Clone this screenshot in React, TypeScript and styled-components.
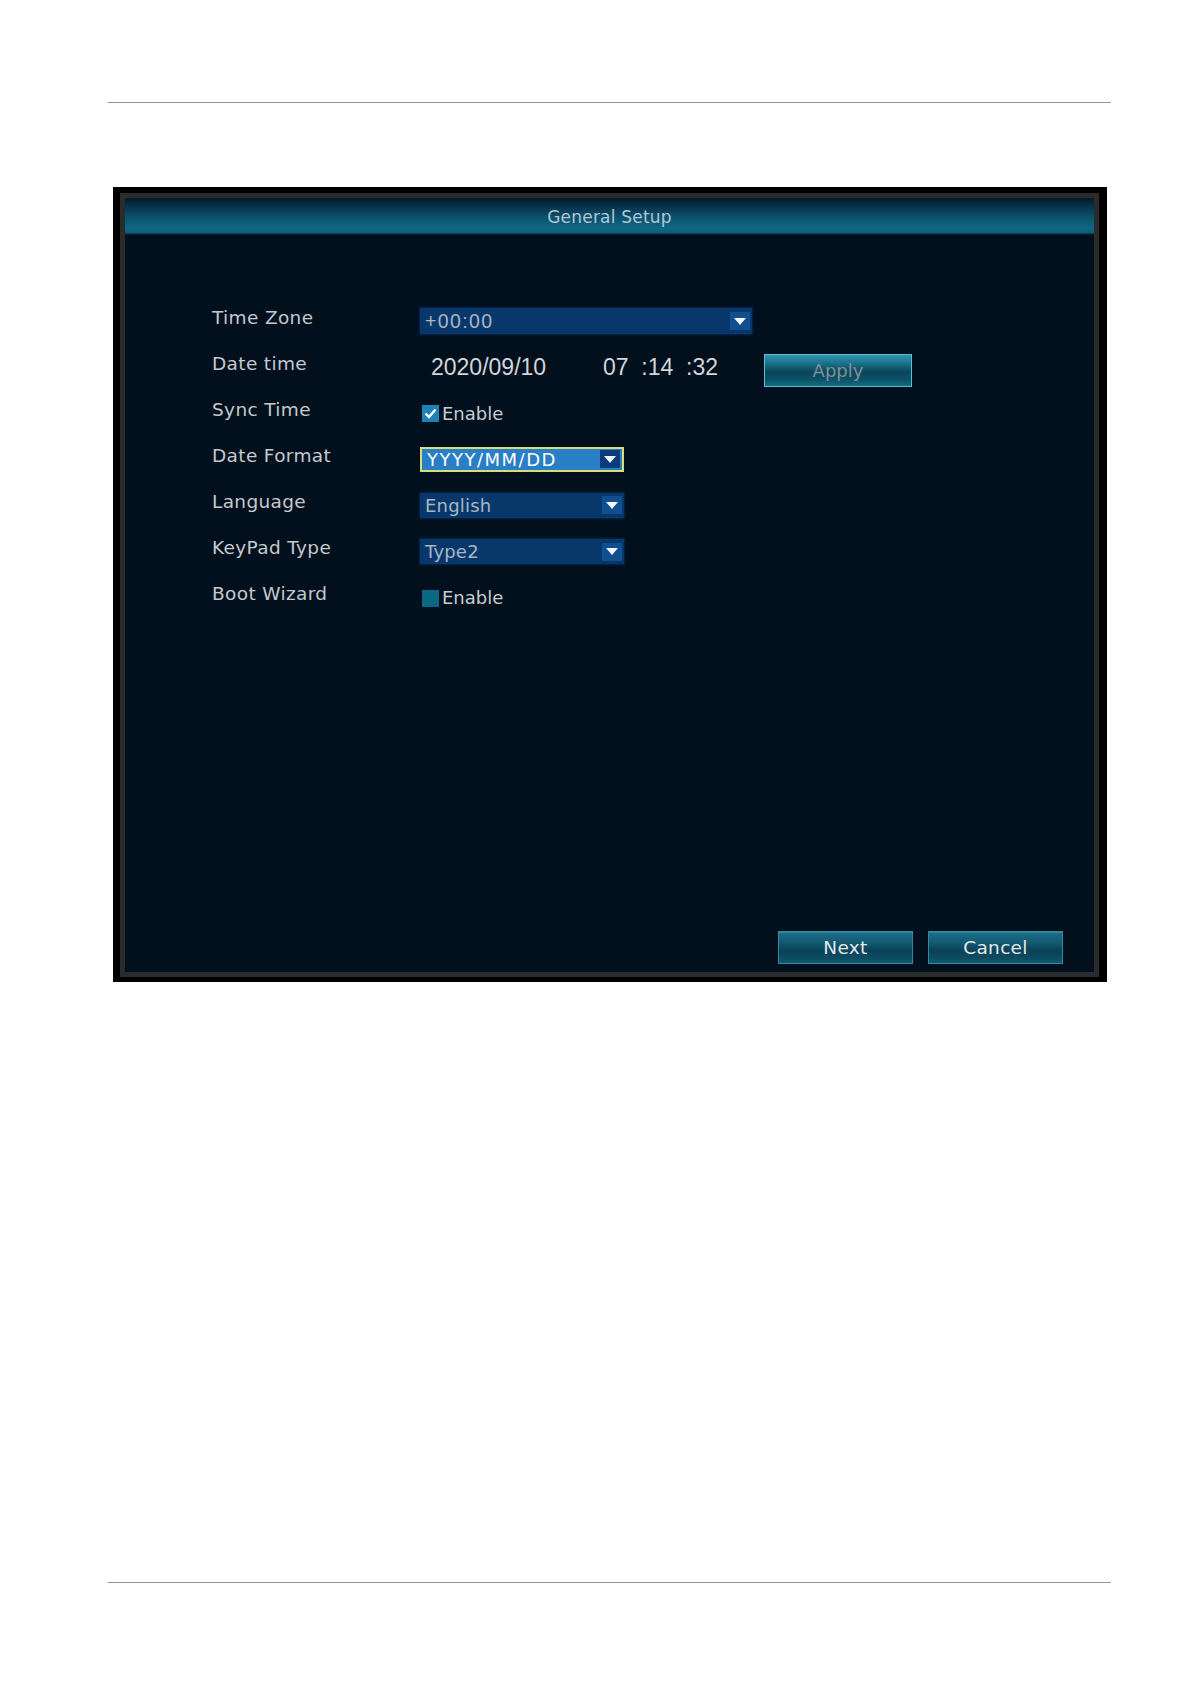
import * as React from 'react';
import styled, { createGlobalStyle } from 'styled-components';

const GlobalStyle = createGlobalStyle`
  html, body {
    margin: 0;
    padding: 0;
    background: #ffffff;
  }
  * { box-sizing: border-box; }
`;

const Page = styled.div`
  width: 1191px;
  min-height: 1684px;
  padding-top: 102px;
  background: #ffffff;
  font-family: "DejaVu Sans", Verdana, sans-serif;
`;

const Rule = styled.div`
  margin: 0 0 0 108px;
  width: 1003px;
  height: 1px;
  background: #929292;
`;

const Frame = styled.section`
  margin: 84px 0 600px 113px;
  width: 994px;
  height: 795px;
  background: #000;
  padding: 6px 8px 5px 7px;
  display: flex;
`;

const Bezel = styled.div`
  flex: 1;
  border: 5px solid #2a2b2d;
  background: #020f1c;
  display: flex;
  flex-direction: column;
`;

const TitleBar = styled.header`
  height: 37px;
  display: flex;
  align-items: center;
  justify-content: center;
  background: linear-gradient(
    to bottom,
    #061826 0%,
    #08314a 22%,
    #0b4f6b 50%,
    #0f6784 82%,
    #0e5e78 93%,
    #04121e 100%
  );
  color: #b2c8d4;
  font-size: 17px;
  letter-spacing: 0.2px;
`;

const Form = styled.div`
  padding: 62px 0 0 87px;
  display: flex;
  flex-direction: column;
`;

const Row = styled.div`
  height: 46.1px;
  display: flex;
  align-items: center;
`;

const Label = styled.div`
  width: 208px;
  padding-bottom: 6px;
  color: #c4c9ce;
  font-size: 18.5px;
  letter-spacing: 0.35px;
`;

const Select = styled.div<{ $width: number; $focus?: boolean; $tall?: boolean }>`
  width: ${(p) => p.$width}px;
  height: ${(p) => (p.$tall ? 26 : 25)}px;
  display: flex;
  align-items: center;
  justify-content: space-between;
  padding: 0 2px 0 5px;
  margin-top: 2px;
  background: ${(p) => (p.$focus ? '#2a7ec6' : '#08386b')};
  border: ${(p) => (p.$focus ? '2px solid #d6de7a' : 'none')};
  box-shadow: ${(p) => (p.$focus ? 'none' : '0 0 2px 1px rgba(8, 56, 107, 0.6)')};
`;

const Value = styled.span<{ $focus?: boolean; $mono?: boolean }>`
  color: ${(p) => (p.$focus ? '#ffffff' : '#a9b6c3')};
  font-family: ${(p) => (p.$mono ? '"Liberation Sans", Arial, sans-serif' : '"DejaVu Sans", Verdana, sans-serif')};
  font-size: ${(p) => (p.$mono ? 19.5 : 18)}px;
  letter-spacing: ${(p) => (p.$mono ? 1.4 : p.$focus ? 1.5 : 0.2)}px;
  line-height: 1;
  padding-top: 1px;
`;

const ArrowBox = styled.span<{ $focus?: boolean }>`
  width: 20px;
  height: 18px;
  display: flex;
  align-items: center;
  justify-content: center;
  background: ${(p) => (p.$focus ? '#0b3b78' : '#0f4f90')};
`;

const DateText = styled.span<{ $width: number }>`
  width: ${(p) => p.$width}px;
  font-family: "Liberation Sans", Arial, sans-serif;
  font-size: 23px;
  color: #d2d6da;
  line-height: 1;
  padding-top: 3px;
`;

const DateGroup = styled.div`
  display: flex;
  align-items: center;
  padding-left: 11px;
`;

const Apply = styled.button`
  width: 148px;
  height: 33px;
  margin-top: 9px;
  border: 1px solid #58bed2;
  background: linear-gradient(
    to bottom,
    #3096ae 0%,
    #1c748c 25%,
    #0a4558 55%,
    #0c5368 80%,
    #136c82 100%
  );
  color: #7f9099;
  font-family: "DejaVu Sans", Verdana, sans-serif;
  font-size: 18px;
  padding: 0;
`;

const CheckGroup = styled.label`
  display: flex;
  align-items: center;
  margin-top: 3px;
  padding-left: 2px;
`;

const Box = styled.span<{ $checked?: boolean }>`
  width: 17px;
  height: 17px;
  display: flex;
  align-items: center;
  justify-content: center;
  background: ${(p) => (p.$checked ? '#1d82b4' : '#0b6882')};
`;

const CheckText = styled.span`
  margin-left: 3px;
  color: #c8cdd2;
  font-size: 18px;
  line-height: 1;
`;

const Footer = styled.div`
  margin-top: auto;
  display: flex;
  justify-content: flex-end;
  gap: 15px;
  padding: 0 31px 8px 0;
`;

const ActionButton = styled.button`
  width: 135px;
  height: 33px;
  border: 1px solid #2f8ba2;
  background: linear-gradient(
    to bottom,
    #1c6f88 0%,
    #145d75 30%,
    #0a4257 60%,
    #0d4c62 85%,
    #125a70 100%
  );
  box-shadow: inset 0 1px 0 rgba(120, 200, 220, 0.25);
  color: #e2e8ec;
  font-family: "DejaVu Sans", Verdana, sans-serif;
  font-size: 18.5px;
  letter-spacing: 0.3px;
  padding: 0;
`;

function Arrow({ focus }: { focus?: boolean }) {
  return (
    <ArrowBox $focus={focus}>
      <svg width="12" height="7" viewBox="0 0 12 7">
        <path d="M0 0 H12 L6 7 Z" fill="#f2f6fa" />
      </svg>
    </ArrowBox>
  );
}

function Dropdown({ value, width, focus, mono, tall }: { value: string; width: number; focus?: boolean; mono?: boolean; tall?: boolean }) {
  return (
    <Select $width={width} $focus={focus} $tall={tall}>
      <Value $focus={focus} $mono={mono}>{value}</Value>
      <Arrow focus={focus} />
    </Select>
  );
}

function Check({ checked }: { checked?: boolean }) {
  return (
    <CheckGroup>
      <Box $checked={checked}>
        {checked && (
          <svg width="13" height="11" viewBox="0 0 13 11">
            <path d="M1.5 5.5 L5 9 L11.5 1.5" fill="none" stroke="#ffffff" strokeWidth="2.4" />
          </svg>
        )}
      </Box>
      <CheckText>Enable</CheckText>
    </CheckGroup>
  );
}

export default function App() {
  return (
    <>
      <GlobalStyle />
      <Page>
        <Rule />
        <Frame>
          <Bezel>
            <TitleBar>General Setup</TitleBar>
            <Form>
              <Row>
                <Label>Time Zone</Label>
                <Dropdown value="+00:00" width={332} mono tall />
              </Row>
              <Row>
                <Label>Date time</Label>
                <DateGroup>
                  <DateText $width={172}>2020/09/10</DateText>
                  <DateText $width={161}>07&nbsp;&nbsp;:14&nbsp;&nbsp;:32</DateText>
                  <Apply>Apply</Apply>
                </DateGroup>
              </Row>
              <Row>
                <Label>Sync Time</Label>
                <Check checked />
              </Row>
              <Row>
                <Label>Date Format</Label>
                <Dropdown value="YYYY/MM/DD" width={204} focus />
              </Row>
              <Row>
                <Label>Language</Label>
                <Dropdown value="English" width={204} />
              </Row>
              <Row>
                <Label>KeyPad Type</Label>
                <Dropdown value="Type2" width={204} />
              </Row>
              <Row>
                <Label>Boot Wizard</Label>
                <Check />
              </Row>
            </Form>
            <Footer>
              <ActionButton>Next</ActionButton>
              <ActionButton>Cancel</ActionButton>
            </Footer>
          </Bezel>
        </Frame>
        <Rule />
      </Page>
    </>
  );
}
